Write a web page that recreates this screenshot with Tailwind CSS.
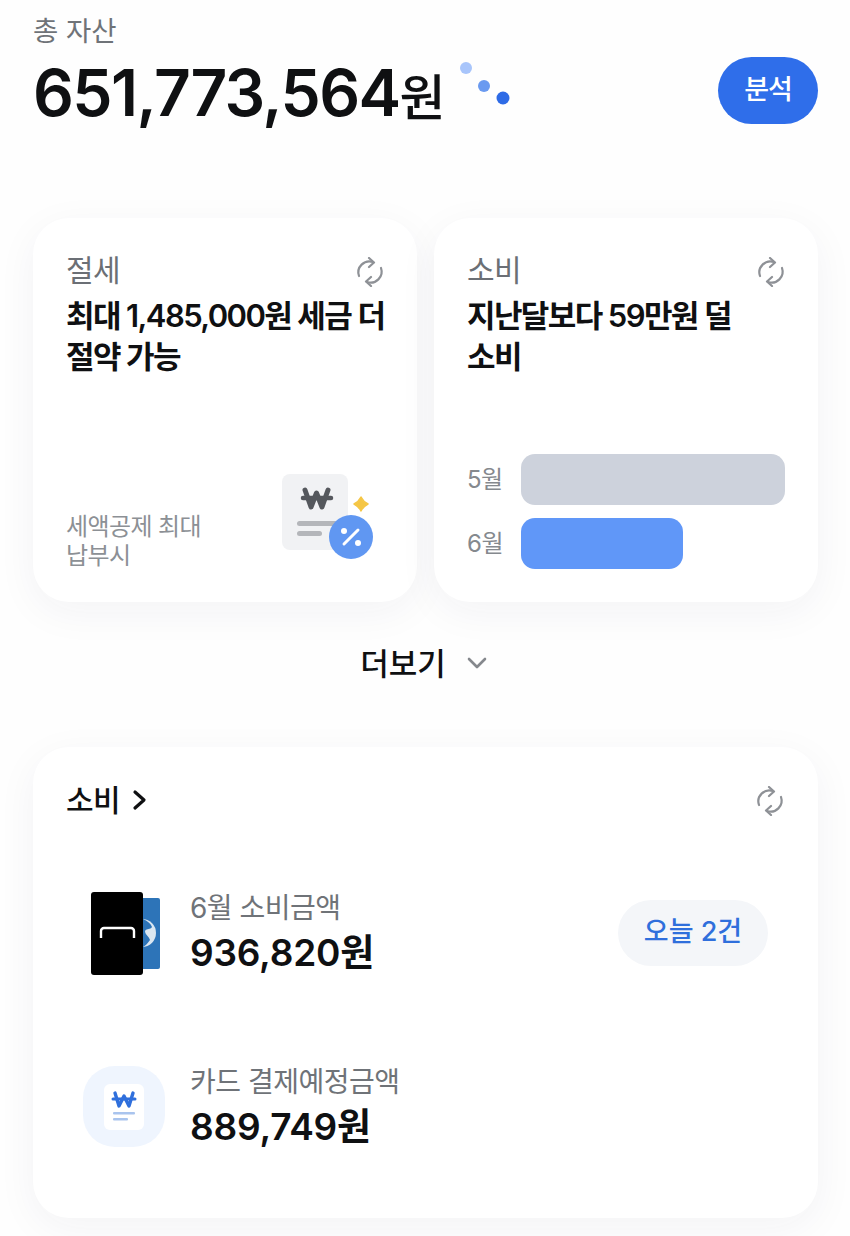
<!DOCTYPE html>
<html lang="ko">
<head>
<meta charset="utf-8">
<script src="https://cdn.jsdelivr.net/npm/@tailwindcss/browser@4"></script>
<title>자산</title>
</head>
<body class="bg-white">
<div class="w-[850px] h-[1236px] overflow-hidden bg-[#fefefe] pl-[33px] pr-[32px] font-['Inter','Noto_Sans_CJK_KR',sans-serif]">
  <header class="h-[218px] pt-[13px]">
    <p class="text-[27.5px] leading-[36px] text-[#6f7378]">총 자산</p>
    <div class="flex items-start justify-between mt-[4px]">
      <div class="flex items-start">
        <h1 class="text-[64px] leading-[80px] font-semibold text-[#0f1012] tracking-[-1.6px]">651,773,564<span class="text-[50px] font-medium tracking-[-2px]">원</span></h1>
        <svg class="ml-[13px] mt-[3px]" width="56" height="50" viewBox="0 0 56 50"><circle cx="9" cy="12" r="6" fill="#a8c5fb"/><circle cx="27" cy="30" r="6" fill="#6a9af0"/><circle cx="46" cy="42" r="6.5" fill="#2e6be6"/></svg>
      </div>
      <button class="w-[100px] h-[67px] mt-[4px] rounded-full bg-[#2f6eea] text-white text-[27px] font-medium tracking-[-1px]">분석</button>
    </div>
  </header>

  <div class="grid grid-cols-2 gap-[17px]">
    <section class="h-[384px] rounded-[36px] bg-white shadow-[0_10px_40px_rgba(30,40,70,0.05)] pt-[31px] pl-[33px] pr-[32px] flex flex-col">
      <div class="flex items-center justify-between h-[42px]">
        <span class="text-[30px] text-[#6b6f75] tracking-[-0.5px]">절세</span>
        <svg class="mt-[3px]" width="30" height="30" viewBox="0 0 30 30" fill="none" stroke="#8e9196" stroke-width="2.2" stroke-linecap="round" stroke-linejoin="round"><path d="M4 19A11 11 0 0 1 18 5"/><path d="M14 1l5 4.500-5 4.500"/><path d="M26 11A11 11 0 0 1 12 25"/><path d="M16 20l-5 4.500 5 4.500"/></svg>
      </div>
      <p class="mt-[4px] whitespace-nowrap text-[31px] leading-[41px] font-semibold text-[#0f1012] tracking-[-1.6px]">최대 1,485,000원 세금 더<br>절약 가능</p>
      <div class="mt-auto mb-[32px] flex items-end justify-between">
        <p class="text-[24px] leading-[29px] text-[#8c9095] tracking-[-0.6px]">세액공제 최대<br>납부시</p>
        <svg class="mb-[8px] mr-[11px]" width="92" height="88" viewBox="0 0 92 88">
          <rect x="0" y="0" width="66" height="76" rx="8" fill="#f1f2f4"/>
          <path d="M23 16l6 17 5.500-14 5.500 14 6-17" fill="none" stroke="#55585d" stroke-width="5" stroke-linecap="round" stroke-linejoin="round"/>
          <path d="M21 24h28" stroke="#55585d" stroke-width="4.500" stroke-linecap="round"/>
          <rect x="15" y="47" width="40" height="5" rx="2.500" fill="#b4b6ba"/>
          <rect x="15" y="57" width="25" height="5" rx="2.500" fill="#b4b6ba"/>
          <path d="M79 23c2 4 3 5 7 7-4 2-5 3-7 7-2-4-3-5-7-7 4-2 5-3 7-7z" fill="#f5c645" stroke="#f5c645" stroke-width="1.500" stroke-linejoin="round"/>
          <circle cx="69" cy="63" r="22" fill="#6097f2"/>
          <path d="M76 56L62 70" stroke="#fff" stroke-width="3" stroke-linecap="round"/>
          <circle cx="62" cy="57" r="3" fill="#fff"/><circle cx="76" cy="69" r="3" fill="#fff"/>
        </svg>
      </div>
    </section>

    <section class="h-[384px] rounded-[36px] bg-white shadow-[0_10px_40px_rgba(30,40,70,0.05)] pt-[31px] pl-[33px] pr-[32px] flex flex-col">
      <div class="flex items-center justify-between h-[42px]">
        <span class="text-[30px] text-[#6b6f75] tracking-[-0.5px]">소비</span>
        <svg class="mt-[3px]" width="30" height="30" viewBox="0 0 30 30" fill="none" stroke="#8e9196" stroke-width="2.2" stroke-linecap="round" stroke-linejoin="round"><path d="M4 19A11 11 0 0 1 18 5"/><path d="M14 1l5 4.500-5 4.500"/><path d="M26 11A11 11 0 0 1 12 25"/><path d="M16 20l-5 4.500 5 4.500"/></svg>
      </div>
      <p class="mt-[4px] whitespace-nowrap text-[31px] leading-[41px] font-semibold text-[#0f1012] tracking-[-1.6px]">지난달보다 59만원 덜<br>소비</p>
      <div class="mt-auto mb-[33px] flex flex-col gap-[13px]">
        <div class="flex items-center gap-[17px]">
          <span class="w-[37px] text-[24px] text-[#85898e] tracking-[-0.5px]">5월</span>
          <div class="w-[264px] h-[51px] rounded-[14px] bg-[#cdd2dc]"></div>
        </div>
        <div class="flex items-center gap-[17px]">
          <span class="w-[37px] text-[24px] text-[#85898e] tracking-[-0.5px]">6월</span>
          <div class="w-[162px] h-[51px] rounded-[14px] bg-[#6097f8]"></div>
        </div>
      </div>
    </section>
  </div>

  <div class="h-[145px] flex items-start justify-center pt-[41px] pr-[3px] gap-[20px]">
    <span class="text-[31px] leading-[42px] font-medium text-[#0f1012]">더보기</span>
    <svg class="mt-[12px]" width="22" height="16" viewBox="0 0 22 16" fill="none" stroke="#85888d" stroke-width="2.6" stroke-linecap="round" stroke-linejoin="round"><path d="M3 4l8 8 8-8"/></svg>
  </div>

  <section class="h-[471px] rounded-[36px] bg-white shadow-[0_10px_40px_rgba(30,40,70,0.05)] pl-[33px] pr-[33px] pt-[32px]">
    <div class="flex items-center justify-between h-[42px]">
      <div class="flex items-center gap-[12px]">
        <span class="text-[30px] font-medium text-[#0f1012] tracking-[-0.5px]">소비</span>
        <svg width="16" height="24" viewBox="0 0 16 24" fill="none" stroke="#0f1012" stroke-width="3.200" stroke-linecap="round" stroke-linejoin="round"><path d="M3 4l9 8-9 8"/></svg>
      </div>
      <svg class="mt-[2px]" width="30" height="30" viewBox="0 0 30 30" fill="none" stroke="#8e9196" stroke-width="2.2" stroke-linecap="round" stroke-linejoin="round"><path d="M4 19A11 11 0 0 1 18 5"/><path d="M14 1l5 4.500-5 4.500"/><path d="M26 11A11 11 0 0 1 12 25"/><path d="M16 20l-5 4.500 5 4.500"/></svg>
    </div>

    <div class="mt-[70px] flex items-center pr-[17px]">
      <svg class="ml-[25px] mb-[2px]" width="70" height="84" viewBox="0 0 70 84">
        <rect x="30" y="6" width="39" height="71" rx="2" fill="#2d74b8"/>
        <circle cx="51" cy="41" r="14" fill="#dbe7f1"/>
        <path d="M52 27c5 2 8 5 9 8-2 3-5 1-7 4 0 4 4 5 5 9-3 4-5 6-7 7z" fill="#2d74b8"/>
        <rect x="0" y="0" width="52" height="83" rx="3" fill="#000"/>
        <path d="M10 46v-7a3 3 0 0 1 3-3h27a3 3 0 0 1 3 3v7" fill="none" stroke="#fff" stroke-width="2.400"/>
      </svg>
      <div class="ml-[29px]">
        <p class="text-[28px] leading-[34px] text-[#6f7378] tracking-[-0.5px]">6월 소비금액</p>
        <p class="mt-[3px] text-[37px] leading-[50px] font-semibold text-[#0f1012] tracking-[-0.2px]">936,820원</p>
      </div>
      <span class="ml-auto mb-[4px] h-[66px] w-[150px] rounded-full bg-[#f4f6f9] flex items-center justify-center text-[27px] font-medium text-[#2f6fdc]">오늘 2건</span>
    </div>

    <div class="mt-[87px] flex items-center">
      <div class="ml-[17px] mb-[4px] w-[82px] h-[81px] rounded-[32px] bg-[#eff5fe] flex items-center justify-center">
        <svg width="40" height="46" viewBox="0 0 40 46">
          <rect width="40" height="46" rx="6" fill="#fff"/>
          <path d="M11 9l4 13 5-10 5 10 4-13" fill="none" stroke="#2f6fdc" stroke-width="3.400" stroke-linecap="round" stroke-linejoin="round"/>
          <path d="M9 15h22" stroke="#2f6fdc" stroke-width="3" stroke-linecap="round"/>
          <rect x="9" y="28" width="22" height="2.500" rx="1" fill="#a9c4ee"/>
          <rect x="9" y="34" width="15" height="2.500" rx="1" fill="#a9c4ee"/>
        </svg>
      </div>
      <div class="ml-[25px]">
        <p class="text-[28px] leading-[34px] text-[#6f7378] tracking-[-0.5px]">카드 결제예정금액</p>
        <p class="mt-[3px] text-[37px] leading-[50px] font-semibold text-[#0f1012] tracking-[-0.2px]">889,749원</p>
      </div>
    </div>
  </section>
</div>
</body>
</html>
